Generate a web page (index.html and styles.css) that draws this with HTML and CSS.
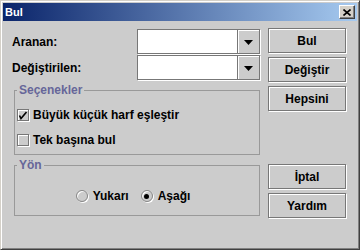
FILE: index.html
```html
<!doctype html>
<html>
<head>
    <meta charset="utf-8">
    <link rel="stylesheet" href="styles.css">
</head>
<body>

<div class='window'>
    <div class='titlebar'>
        <span class='title'>Bul</span>
        <span class='close'>
            <svg width='8' height='7' viewBox='0 0 8 7'>
                <path d='M0.5 0.5 L7.5 6.5 M7.5 0.5 L0.5 6.5' stroke='#000' stroke-width='1.6' fill='none'/>
            </svg>
        </span>
    </div>

    <div class='content'>
        <div class='main'>
            <div class='field'>
                <label>Aranan:</label>
                <div class='combo'>
                    <div class='combo-text'></div>
                    <div class='combo-btn'>
                        <svg width='9' height='5' viewBox='0 0 9 5'><path d='M0 0 H9 L4.5 5 Z' fill='#000'/></svg>
                    </div>
                </div>
            </div>
            <div class='field'>
                <label>Değiştirilen:</label>
                <div class='combo'>
                    <div class='combo-text'></div>
                    <div class='combo-btn'>
                        <svg width='9' height='5' viewBox='0 0 9 5'><path d='M0 0 H9 L4.5 5 Z' fill='#000'/></svg>
                    </div>
                </div>
            </div>

            <fieldset class='group options'>
                <legend>Seçenekler</legend>
                <div class='check-row'>
                    <span class='checkbox'>
                        <svg width='10' height='10' viewBox='0 0 10 10'>
                            <path d='M1.5 5.5 L3 8.5 L8.5 2' stroke='#000' stroke-width='1.6' fill='none'/>
                        </svg>
                    </span>
                    <span>Büyük küçük harf eşleştir</span>
                </div>
                <div class='check-row'>
                    <span class='checkbox'></span>
                    <span>Tek başına bul</span>
                </div>
            </fieldset>

            <fieldset class='group direction'>
                <legend>Yön</legend>
                <div class='radios'>
                    <div class='radio-item'>
                        <span class='radio'></span>
                        <span>Yukarı</span>
                    </div>
                    <div class='radio-item'>
                        <span class='radio selected'></span>
                        <span>Aşağı</span>
                    </div>
                </div>
            </fieldset>
        </div>

        <div class='side'>
            <div class='stack'>
                <div class='btn'>Bul</div>
                <div class='btn'>Değiştir</div>
                <div class='btn'>Hepsini</div>
            </div>
            <div class='stack lower'>
                <div class='btn'>İptal</div>
                <div class='btn'>Yardım</div>
            </div>
        </div>
    </div>
</div>

</body>
</html>
```

FILE: styles.css
```css
html, body {
    margin: 0;
}

body {
    width: 360px;
    height: 250px;
    font-family: "Liberation Sans", Arial, sans-serif;
    font-size: 12px;
    font-weight: bold;
    color: #000;
    background: #cccccc;
}

.window {
    box-sizing: border-box;
    width: 360px;
    height: 250px;
    display: flex;
    flex-direction: column;
    padding: 2px;
    border: 1px solid;
    border-color: #d4d0c8 #404040 #404040 #d4d0c8;
    box-shadow: inset 1px 1px #fff, inset -1px -1px #808080;
    background: #cccccc;
}

.titlebar {
    height: 18px;
    display: flex;
    align-items: center;
    justify-content: space-between;
    padding: 0 2px;
    background: linear-gradient(to right, #0a246a, #a6caf0);
    color: #fff;
    font-size: 11px;
}

.close {
    box-sizing: border-box;
    width: 16px;
    height: 14px;
    display: flex;
    align-items: center;
    justify-content: center;
    background: #d4d0c8;
    border: 1px solid;
    border-color: #fff #404040 #404040 #fff;
    box-shadow: inset -1px -1px #808080;
}

.content {
    display: flex;
    gap: 8px;
    padding: 7px 10px 0 9px;
}

.main {
    width: 248px;
    display: flex;
    flex-direction: column;
    padding-top: 1px;
}

.field {
    height: 25px;
    display: flex;
    align-items: center;
    justify-content: space-between;
}

.field + .field {
    margin-top: 1px;
}

.combo {
    box-sizing: border-box;
    width: 123px;
    height: 25px;
    display: flex;
    border: 1px solid #777;
    box-shadow: 1px 1px #fff;
    background: #fff;
}

.combo-text {
    flex: 1;
}

.combo-btn {
    width: 22px;
    display: flex;
    align-items: center;
    justify-content: center;
    padding-top: 2px;
    box-sizing: border-box;
    border-left: 1px solid #777;
    background: #cccccc;
    box-shadow: inset 1px 1px #fff;
}

.group {
    margin: 3px 0 0 2px;
    padding: 8px 0 4px 2px;
    border: 1px solid #999;
    min-width: 0;
}

legend {
    padding: 0 2px;
    line-height: 14px;
    color: #666699;
}

.check-row {
    height: 20px;
    display: flex;
    align-items: center;
    gap: 4px;
}

.check-row + .check-row {
    margin-top: 5px;
}

.checkbox {
    box-sizing: border-box;
    width: 12px;
    height: 12px;
    display: flex;
    align-items: center;
    justify-content: center;
    border: 1px solid #777;
    box-shadow: inset 1px 1px #fff, 1px 1px #fff;
}

.direction {
    padding: 14px 0 9px 2px;
}

.radios {
    height: 20px;
    display: flex;
    align-items: center;
    justify-content: center;
    gap: 12px;
    padding-right: 10px;
}

.radio-item {
    display: flex;
    align-items: center;
    gap: 5px;
}

.radio {
    box-sizing: border-box;
    width: 12px;
    height: 12px;
    display: flex;
    align-items: center;
    justify-content: center;
    border: 1px solid #888;
    border-radius: 50%;
    box-shadow: inset 1px 1px #fff, 1px 1px #fff;
}

.radio.selected::after {
    content: '';
    width: 5px;
    height: 5px;
    border-radius: 50%;
    background: #000;
}

.side {
    width: 78px;
    display: flex;
    flex-direction: column;
}

.stack {
    display: flex;
    flex-direction: column;
    gap: 4px;
}

.stack.lower {
    margin-top: 53px;
}

.btn {
    box-sizing: border-box;
    height: 25px;
    display: flex;
    align-items: center;
    justify-content: center;
    border: 1px solid #777;
    box-shadow: inset 1px 1px #fff, 1px 1px #fff;
}
```
